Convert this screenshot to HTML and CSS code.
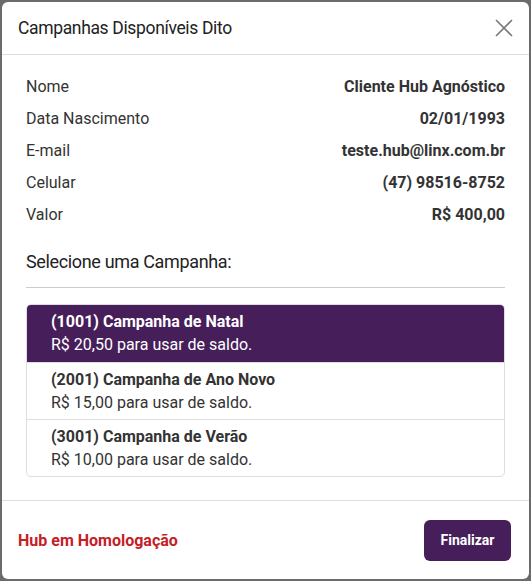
FILE: index.html
```html
<!DOCTYPE html>
<html lang="pt-BR">
<head>
    <meta charset="UTF-8">
    <meta name="viewport" content="width=device-width, initial-scale=1.0">
    <title>Campanhas Disponíveis Dito</title>
    <link rel="stylesheet" href="styles.css">
</head>
<body>
<div class="modal">
    <!-- Cabeçalho -->
    <div class="modal-header">
        <h5 class="modal-title">Campanhas Disponíveis Dito</h5>
        <button class="btn-close" aria-label="Fechar">
            <svg width="18" height="18" viewBox="0 0 18 18">
                <path d="M1 1 L17 17 M17 1 L1 17" stroke="#7a7a7a" stroke-width="1.6" fill="none"/>
            </svg>
        </button>
    </div>

    <!-- Dados do cliente -->
    <div class="modal-body">
        <div class="info-row"><span>Nome</span><strong>Cliente Hub Agnóstico</strong></div>
        <div class="info-row"><span>Data Nascimento</span><strong>02/01/1993</strong></div>
        <div class="info-row"><span>E-mail</span><strong>teste.hub@linx.com.br</strong></div>
        <div class="info-row"><span>Celular</span><strong>(47) 98516-8752</strong></div>
        <div class="info-row"><span>Valor</span><strong>R$ 400,00</strong></div>

        <p class="section-title">Selecione uma Campanha:</p>
        <hr>

        <ul class="list-group">
            <li class="list-item active">
                <strong>(1001) Campanha de Natal</strong>
                <span>R$ 20,50 para usar de saldo.</span>
            </li>
            <li class="list-item">
                <strong>(2001) Campanha de Ano Novo</strong>
                <span>R$ 15,00 para usar de saldo.</span>
            </li>
            <li class="list-item">
                <strong>(3001) Campanha de Verão</strong>
                <span>R$ 10,00 para usar de saldo.</span>
            </li>
        </ul>
    </div>

    <!-- Rodapé -->
    <div class="modal-footer">
        <span class="env-label">Hub em Homologação</span>
        <button class="btn-primary">Finalizar</button>
    </div>
</div>
</body>
</html>
```

FILE: styles.css
```css
:root {
    --roxo: #461e59;
    --texto: #333;
    --borda: #dedede;
    --vermelho: #c42026;
}

* {
    margin: 0;
    padding: 0;
    box-sizing: border-box;
}

body {
    background: #6b6b6b;
    font-family: Roboto, "Liberation Sans", sans-serif;
    color: var(--texto);
    padding: 2px;
    height: 581px;
    overflow: hidden;
}

.modal {
    background: #fff;
    border-radius: 6px;
    height: 577px;
    display: flex;
    flex-direction: column;
}

.modal-header {
    display: flex;
    align-items: center;
    justify-content: space-between;
    height: 53px;
    padding: 0 16px;
    border-bottom: 1px solid var(--borda);
}

.modal-title {
    font-size: 17.5px;
    font-weight: 400;
    color: #222;
    letter-spacing: -0.35px;
}

.btn-close {
    background: none;
    border: none;
    display: flex;
    cursor: pointer;
}

.modal-body {
    padding: 15px 24px 0;
    flex: 1;
}

.info-row {
    display: flex;
    justify-content: space-between;
    align-items: center;
    height: 32px;
    font-size: 16px;
}

.info-row strong {
    font-weight: 700;
}

.section-title {
    font-size: 18px;
    color: #222;
    margin-top: 16px;
    line-height: 32px;
    letter-spacing: -0.35px;
}

hr {
    border: none;
    border-top: 1px solid #ccc;
    margin: 9px 0 16px;
}

.list-group {
    list-style: none;
    border: 1px solid var(--borda);
    border-radius: 5px;
    overflow: hidden;
}

.list-item {
    display: flex;
    flex-direction: column;
    justify-content: center;
    height: 57px;
    padding: 0 24px;
    font-size: 16px;
    line-height: 23px;
    border-top: 1px solid var(--borda);
}

.list-item:first-child {
    border-top: none;
}

.list-item strong {
    font-weight: 700;
}

.list-item.active {
    background: var(--roxo);
    color: #fff;
    margin: -1px -1px 0;
    height: 58px;
    padding-left: 25px;
}

.modal-footer {
    display: flex;
    align-items: center;
    justify-content: space-between;
    height: 79px;
    padding: 0 18px 0 16px;
    border-top: 1px solid var(--borda);
}

.env-label {
    color: var(--vermelho);
    font-weight: 700;
    font-size: 16px;
}

.btn-primary {
    background: var(--roxo);
    color: #fff;
    border: none;
    border-radius: 6px;
    width: 87px;
    height: 41px;
    font-family: Roboto, sans-serif;
    font-weight: 700;
    font-size: 14px;
    cursor: pointer;
}
```
